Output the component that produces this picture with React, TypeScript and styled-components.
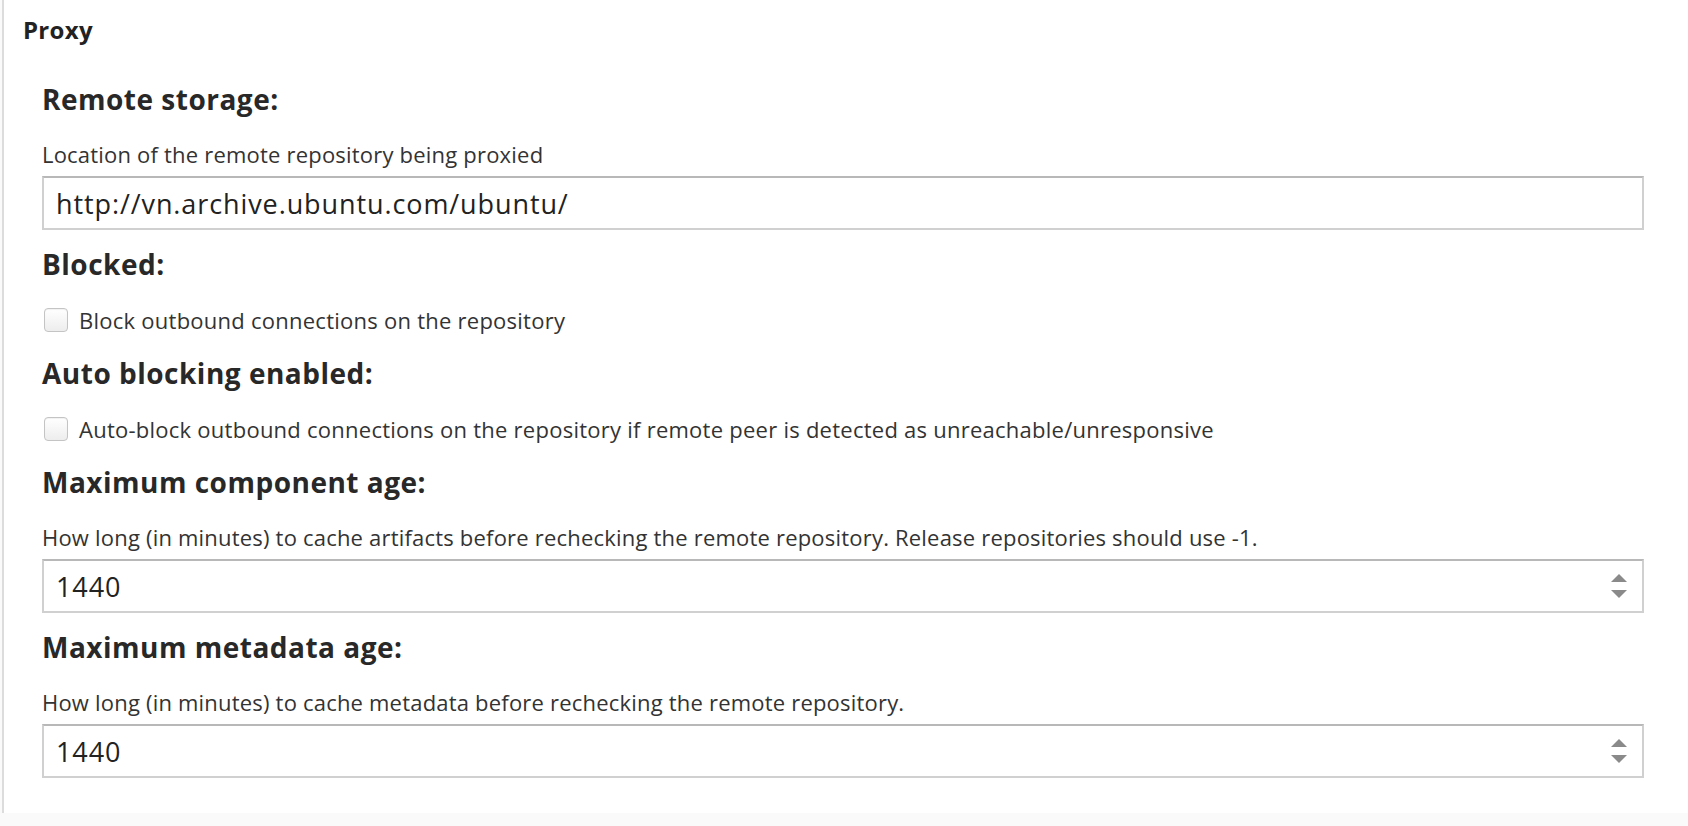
import { createGlobalStyle, styled } from 'styled-components';

const Global = createGlobalStyle`
  html, body {
    margin: 0;
    padding: 0;
    background: #fafafa;
  }
  body {
    font-family: "Open Sans", Lato, "Liberation Sans", sans-serif;
    color: #333;
  }
`

const Panel = styled.div`
  margin-left: 2px;
  border-left: 2px solid #dcdcdc;
  background: #fff;
  padding: 16px 0 35px 19px;
`
const Title = styled.h2`
  margin: 0;
  font-size: 24px;
  letter-spacing: 0.3px;
  line-height: 28px;
  padding-bottom: 2px;
  font-weight: 700;
  color: #222;
`
const Body = styled.div`
  padding: 39px 44px 0 19px;
  display: flex;
  flex-direction: column;
`
const Field = styled.div<{ $gap: number }>`
  display: flex;
  flex-direction: column;
  margin-bottom: ${p => p.$gap}px;
  &:last-child { margin-bottom: 0; }
`
const Heading = styled.h3`
  margin: 0 0 29px;
  font-size: 28px;
  letter-spacing: 0.5px;
  line-height: 28px;
  font-weight: 700;
  color: #282828;
`
const Help = styled.div`
  font-size: 22px;
  letter-spacing: 0.2px;
  line-height: 24px;
  color: #333;
  margin-bottom: 10px;
`
const InputBox = styled.div`
  position: relative;
  height: 50px;
  border: 2px solid #d0d0d0;
  border-top-color: #b8b8b8;
  display: flex;
  align-items: center;
  padding: 0 12px;
  font-size: 27px;
  letter-spacing: 0.9px;
  color: #222;
`
const Spinner = styled.svg`
  position: absolute;
  right: 14px;
  top: 50%;
  transform: translateY(-50%);
`
const CheckRow = styled.label`
  display: flex;
  align-items: center;
  gap: 11px;
  height: 26px;
  font-size: 22px;
  letter-spacing: 0.25px;
  color: #333;
`
const Box = styled.span`
  flex: none;
  width: 22px;
  height: 22px;
  margin-left: 2px;
  border: 1.5px solid #c4c4c4;
  border-radius: 4px;
  background: linear-gradient(#fff, #ededed);
  box-shadow: inset 0 1px 1px rgba(0,0,0,0.06);
`

function NumberInput({ value }: { value: string }) {
  return (
    <InputBox>
      {value}
      <Spinner width="18" height="26" viewBox="0 0 18 26">
        <path d="M1 9 L9 1 L17 9 Z" fill="#8a8a8a" />
        <path d="M1 17 L17 17 L9 25 Z" fill="#8a8a8a" />
      </Spinner>
    </InputBox>
  )
}

export default function App() {
  return (
    <>
      <Global />
      <Panel>
        <Title>Proxy</Title>
        <Body>
          <Field $gap={20}>
            <Heading>Remote storage:</Heading>
            <Help>Location of the remote repository being proxied</Help>
            <InputBox>http://vn.archive.ubuntu.com/ubuntu/</InputBox>
          </Field>
          <Field $gap={26}>
            <Heading>Blocked:</Heading>
            <CheckRow><Box />Block outbound connections on the repository</CheckRow>
          </Field>
          <Field $gap={26}>
            <Heading>Auto blocking enabled:</Heading>
            <CheckRow><Box />Auto-block outbound connections on the repository if remote peer is detected as unreachable/unresponsive</CheckRow>
          </Field>
          <Field $gap={20}>
            <Heading>Maximum component age:</Heading>
            <Help>How long (in minutes) to cache artifacts before rechecking the remote repository. Release repositories should use -1.</Help>
            <NumberInput value="1440" />
          </Field>
          <Field $gap={20}>
            <Heading>Maximum metadata age:</Heading>
            <Help>How long (in minutes) to cache metadata before rechecking the remote repository.</Help>
            <NumberInput value="1440" />
          </Field>
        </Body>
      </Panel>
    </>
  )
}
